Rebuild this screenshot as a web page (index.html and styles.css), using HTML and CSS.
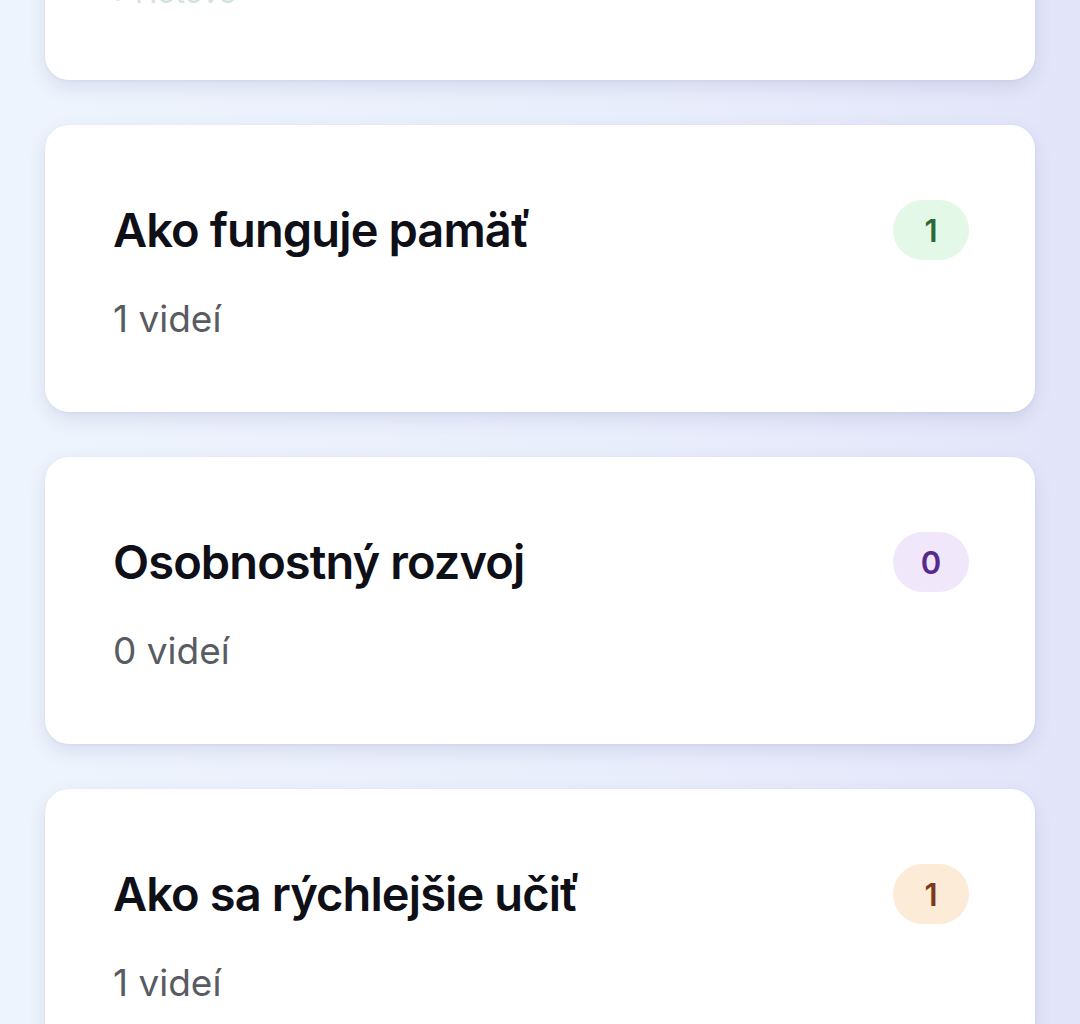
FILE: index.html
```html
<!DOCTYPE html>
<html lang="sk">
<head>
	<meta charset="UTF-8">
	<title>Kategórie</title>
	<link rel="stylesheet" href="styles.css">
</head>
<body>
    <div class="wrap">
        <ul class="list">
            <li class="card card-first">
                <p class="sub sub-faded">› Hotové</p>
            </li>
            <li class="card">
                <div class="head">
                    <h2 class="title">Ako funguje pamäť</h2>
                    <span class="badge badge-green">1</span>
                </div>
                <p class="sub">1 videí</p>
            </li>
            <li class="card">
                <div class="head">
                    <h2 class="title">Osobnostný rozvoj</h2>
                    <span class="badge badge-purple">0</span>
                </div>
                <p class="sub">0 videí</p>
            </li>
            <li class="card">
                <div class="head">
                    <h2 class="title">Ako sa rýchlejšie učiť</h2>
                    <span class="badge badge-orange">1</span>
                </div>
                <p class="sub">1 videí</p>
            </li>
        </ul>
    </div>
</body>
</html>
```

FILE: styles.css
```css
*{
    margin: 0px;
    padding: 0px;
    box-sizing: border-box;
}
html{height:100%;}
body{
    width: 100%;
    min-height: 100%;
    margin: 0;
    overflow: hidden;
    font-family: Inter, "Noto Sans", sans-serif;
    background: linear-gradient(90deg, #eef4fd 0%, #e9eefc 55%, #e2e5f9 100%);
}
.wrap{
    padding: 0 45px;
    height: 1024px;
    overflow: hidden;
}
.list{
    list-style: none;
    display: flex;
    flex-direction: column;
    gap: 45px;
}
.card{
    background: #fff;
    border-radius: 24px;
    height: 287px;
    padding: 75px 66px 0 68px;
    box-shadow: 0 7px 18px rgba(70, 80, 130, 0.13), 0 1px 3px rgba(70, 80, 130, 0.06);
}
.card-first{
    margin-top: -207px;
    display: flex;
    align-items: flex-end;
    padding: 0 66px 66px 70px;
}
.head{
    display: flex;
    justify-content: space-between;
    align-items: center;
}
.title{
    font-size: 47px;
    line-height: 57.6px;
    font-weight: 600;
    color: #0e0f17;
    letter-spacing: -0.9px;
}
.sub{
    margin-top: 37px;
    font-size: 37px;
    line-height: 44px;
    font-weight: 400;
    color: #585b62;
}
.sub-faded{
    margin-top: 0;
    font-size: 30px;
    color: #d3e2e1;
}
.badge{
    display: flex;
    align-items: center;
    justify-content: center;
    min-width: 76px;
    height: 60px;
    padding: 0 20px;
    border-radius: 30px;
    font-size: 31px;
    font-weight: 600;
}
.badge-green{
    background: #e3f8e6;
    color: #2b6a36;
}
.badge-purple{
    background: #f0e7fb;
    color: #57298a;
}
.badge-orange{
    background: #fcebd6;
    color: #7b3a1c;
}
```
